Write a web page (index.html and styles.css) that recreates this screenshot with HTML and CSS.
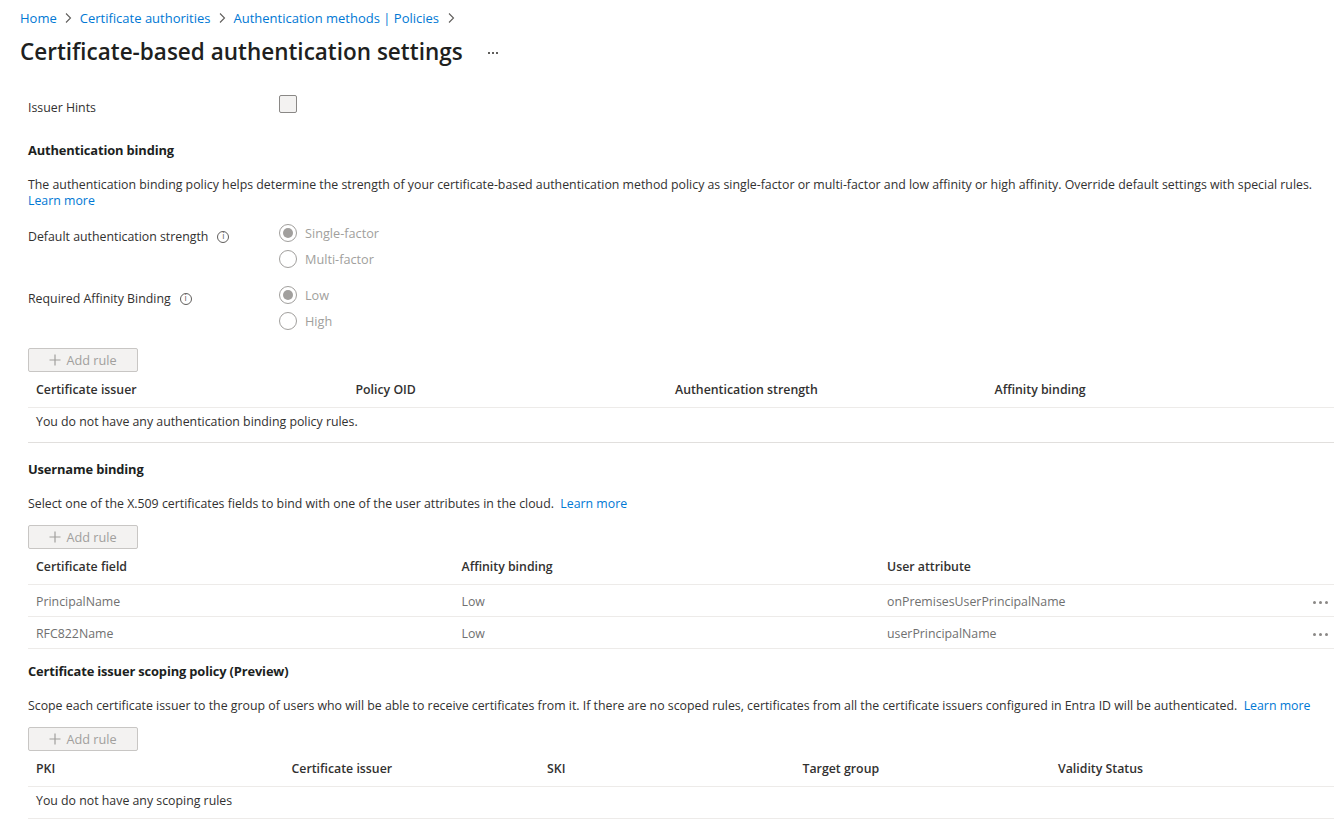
FILE: index.html
```html
<!DOCTYPE html>
<html lang="en">
<head>
<meta charset="utf-8">
<title>Certificate-based authentication settings</title>
<link rel="stylesheet" href="styles.css">
</head>
<body>
<div class="page">
  <nav class="breadcrumb">
    <a class="crumb">Home</a>
    <svg class="chev" viewBox="0 0 8 12" width="8" height="12"><path d="M2 1.5 L6.5 6 L2 10.5" fill="none" stroke="#605e5c" stroke-width="1.1"/></svg>
    <a class="crumb">Certificate authorities</a>
    <svg class="chev" viewBox="0 0 8 12" width="8" height="12"><path d="M2 1.5 L6.5 6 L2 10.5" fill="none" stroke="#605e5c" stroke-width="1.1"/></svg>
    <a class="crumb">Authentication methods | Policies</a>
    <svg class="chev" viewBox="0 0 8 12" width="8" height="12"><path d="M2 1.5 L6.5 6 L2 10.5" fill="none" stroke="#605e5c" stroke-width="1.1"/></svg>
  </nav>
  <header class="title-row">
    <h1 class="title">Certificate-based authentication settings</h1>
    <span class="more-dots"><i></i><i></i><i></i></span>
  </header>

  <main class="content">
    <div class="field-row issuer">
      <div class="field-label">Issuer Hints</div>
      <span class="checkbox"></span>
    </div>

    <h2 class="section-title first">Authentication binding</h2>
    <p class="desc wrap">The authentication binding policy helps determine the strength of your certificate-based authentication method policy as single-factor or multi-factor and low affinity or high affinity. Override default settings with special rules. <a class="link">Learn more</a></p>

    <div class="field-row radios-row r1">
      <div class="field-label">Default authentication strength <span class="info">i</span></div>
      <div class="radio-group">
        <div class="radio checked"><span class="circle"></span>Single-factor</div>
        <div class="radio"><span class="circle"></span>Multi-factor</div>
      </div>
    </div>
    <div class="field-row radios-row r2">
      <div class="field-label">Required Affinity Binding <span class="info">i</span></div>
      <div class="radio-group">
        <div class="radio checked"><span class="circle"></span>Low</div>
        <div class="radio"><span class="circle"></span>High</div>
      </div>
    </div>

    <button class="add-btn b1"><svg viewBox="0 0 12 12" width="12" height="12"><path d="M6 0.5 V11.5 M0.5 6 H11.5" stroke="#0078d4" stroke-width="1.2" fill="none"/></svg>Add rule</button>
    <div class="table t4">
      <div class="thead"><div>Certificate issuer</div><div>Policy OID</div><div>Authentication strength</div><div>Affinity binding</div><div></div></div>
      <div class="trow empty"><div class="full">You do not have any authentication binding policy rules.</div></div>
    </div>

    <h2 class="section-title s2">Username binding</h2>
    <p class="desc">Select one of the X.509 certificates fields to bind with one of the user attributes in the cloud. &nbsp;<a class="link">Learn more</a></p>
    <button class="add-btn"><svg viewBox="0 0 12 12" width="12" height="12"><path d="M6 0.5 V11.5 M0.5 6 H11.5" stroke="#0078d4" stroke-width="1.2" fill="none"/></svg>Add rule</button>
    <div class="table t3">
      <div class="thead"><div>Certificate field</div><div>Affinity binding</div><div>User attribute</div><div></div></div>
      <div class="trow data"><div>PrincipalName</div><div>Low</div><div>onPremisesUserPrincipalName</div><div class="act"><span class="row-dots"><i></i><i></i><i></i></span></div></div>
      <div class="trow data"><div>RFC822Name</div><div>Low</div><div>userPrincipalName</div><div class="act"><span class="row-dots"><i></i><i></i><i></i></span></div></div>
    </div>

    <h2 class="section-title s3">Certificate issuer scoping policy (Preview)</h2>
    <p class="desc">Scope each certificate issuer to the group of users who will be able to receive certificates from it. If there are no scoped rules, certificates from all the certificate issuers configured in Entra ID will be authenticated. &nbsp;<a class="link">Learn more</a></p>
    <button class="add-btn"><svg viewBox="0 0 12 12" width="12" height="12"><path d="M6 0.5 V11.5 M0.5 6 H11.5" stroke="#0078d4" stroke-width="1.2" fill="none"/></svg>Add rule</button>
    <div class="table t5">
      <div class="thead"><div>PKI</div><div>Certificate issuer</div><div>SKI</div><div>Target group</div><div>Validity Status</div><div></div></div>
      <div class="trow empty last"><div class="full">You do not have any scoping rules</div></div>
    </div>
  </main>
</div>
</body>
</html>
```

FILE: styles.css
```css
html, body {
  margin: 0;
  padding: 0;
  overflow: hidden;
  background: #ffffff;
}
body {
  font-family: "Open Sans", "Noto Sans", "DejaVu Sans", sans-serif;
  font-size: 12.33px;
  color: #323130;
  width: 1334px;
  height: 827px;
}
.page {
  width: 1420px;
}
.breadcrumb {
  display: flex;
  align-items: center;
  gap: 7.5px;
  padding-left: 20px;
  margin-top: 8px;
  height: 20px;
  line-height: 20px;
  font-size: 13px;
}
.crumb {
  color: #0078d4;
  text-decoration: none;
}
.chev { display: block; }
.title-row {
  display: flex;
  align-items: center;
  padding-left: 20px;
  margin-top: 8px;
  height: 32px;
}
.title {
  margin: 0;
  font-size: 22.5px;
  font-weight: 600;
  line-height: 32px;
  color: #201f1e;
}
.more-dots {
  display: flex;
  gap: 2px;
  margin-left: 25px;
  margin-top: 2px;
}
.more-dots i {
  width: 2px;
  height: 2px;
  background: #605e5c;
  display: block;
}
.content {
  padding-left: 28px;
  width: 1340px;
}
.field-row {
  display: flex;
  align-items: flex-start;
}
.field-label {
  width: 251px;
  flex: none;
  line-height: 20px;
  display: flex;
  align-items: center;
}
.issuer { margin-top: 23px; height: 26px; }
.issuer .field-label { padding-top: 7px; }
.checkbox {
  width: 16px;
  height: 16px;
  border: 1px solid #8a8886;
  border-radius: 2px;
  background: #f3f2f1;
  margin-top: 4px;
}
.section-title {
  margin: 17px 0 0;
  font-size: 12.9px;
  font-weight: 700;
  letter-spacing: -0.15px;
  line-height: 20px;
  color: #201f1e;
}
.section-title.first { margin-top: 23px; }
.section-title.s2 { margin-top: 16px; }
.section-title.s3 { margin-top: 11px; }
.desc {
  margin: 17px 0 0;
  line-height: 16px;
  max-width: 1306px;
}
.desc.wrap { margin-top: 17px; }
.link { color: #0078d4; text-decoration: none; }
.info {
  display: inline-flex;
  align-items: center;
  justify-content: center;
  width: 10px;
  height: 10px;
  border: 1px solid #605e5c;
  border-radius: 50%;
  font-size: 8px;
  line-height: 10px;
  color: #605e5c;
  margin-left: 9px;
  font-family: "DejaVu Sans", sans-serif;
}
.radios-row.r1 { margin-top: 11px; }
.radios-row.r2 { margin-top: 10px; }
.radios-row .field-label { padding-top: 7px; }
.radio-group { display: flex; flex-direction: column; }
.radio {
  display: flex;
  align-items: center;
  height: 26px;
  color: #a19f9d;
  font-size: 12.7px;
}
.circle {
  width: 16px;
  height: 16px;
  border: 1px solid #a19f9d;
  border-radius: 50%;
  margin-right: 8px;
  display: flex;
  align-items: center;
  justify-content: center;
  box-sizing: content-box;
}
.radio.checked .circle::after {
  content: "";
  width: 10px;
  height: 10px;
  border-radius: 50%;
  background: #a19f9d;
}
.add-btn {
  display: flex;
  align-items: center;
  justify-content: center;
  gap: 5px;
  width: 110px;
  height: 24px;
  margin-top: 14px;
  padding: 0;
  border: 1px solid #c8c6c4;
  border-radius: 2px;
  background: #f3f2f1;
  color: #a19f9d;
  font-family: inherit;
  font-size: 12.7px;
}
.add-btn svg path { stroke: #a19f9d; }
.desc + .add-btn { margin-top: 13px; }
.table { width: 1340px; }
.thead, .trow {
  display: grid;
  border-bottom: 1px solid #edebe9;
}
.t4 .thead, .t4 .trow { grid-template-columns: repeat(4, 319.5px) 1fr; }
.t3 .thead, .t3 .trow { grid-template-columns: repeat(3, 425.5px) 1fr; }
.t5 .thead, .t5 .trow { grid-template-columns: repeat(5, 255.5px) 1fr; }
.thead {
  align-items: center;
  font-weight: 600;
  color: #323130;
  box-sizing: border-box;
  height: 36px;
  padding-top: 1px;
}
.thead > div, .trow > div {
  padding-left: 8px;
  line-height: 16px;
  white-space: nowrap;
}
.trow.empty { padding: 6px 0 12px; }
.trow.empty.last { padding: 6px 0 9px; }
.trow .full { grid-column: 1 / -1; }
.t4 .trow.empty { border-bottom-color: #e1dfdd; }
.trow.data {
  padding: 9px 0 6px;
  color: #707070;
}
.act { display: flex; align-items: center; }
.row-dots {
  display: flex;
  gap: 3px;
  margin-top: 1px;
}
.row-dots i {
  display: block;
  width: 3px;
  height: 3px;
  border-radius: 50%;
  background: #8a8886;
}
.t3 + .section-title { margin-top: 12px; }
```
